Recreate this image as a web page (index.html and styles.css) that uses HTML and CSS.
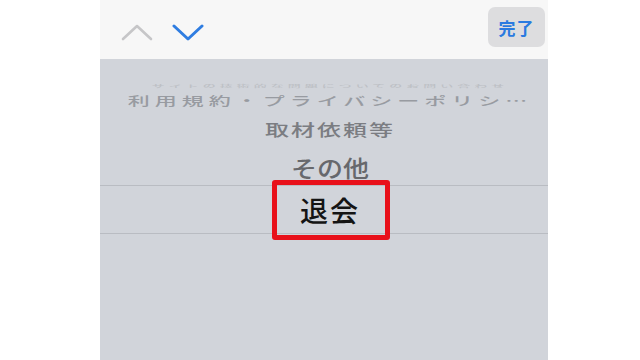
FILE: index.html
```html
<!DOCTYPE html>
<html lang="ja">
<head>
<meta charset="utf-8">
<link rel="stylesheet" href="styles.css">
</head>
<body>
<div class="page">
  <div class="panel">
    <div class="toolbar">
      <div class="arrows">
        <svg class="chev" width="32" height="20" viewBox="0 0 32 20"><path d="M2 16 L16 3 L30 16" fill="none" stroke="#c6c6c8" stroke-width="2.6" stroke-linecap="round" stroke-linejoin="round"/></svg>
        <svg class="chev" width="32" height="20" viewBox="0 0 32 20"><path d="M2 3 L16 16 L30 3" fill="none" stroke="#2f7de1" stroke-width="3" stroke-linecap="round" stroke-linejoin="round"/></svg>
      </div>
      <div class="done">完了</div>
    </div>
    <div class="picker">
      <div class="row r0"><span>サイトの技術的な問題についてのお問い合わせ</span></div>
      <div class="row r1"><span>利用規約・プライバシーポリシ…</span></div>
      <div class="row r2"><span>取材依頼等</span></div>
      <div class="row r3"><span>その他</span></div>
      <div class="row sel"><span>退会</span></div>
      <div class="mark"></div>
    </div>
  </div>
</div>
</body>
</html>
```
FILE: styles.css
```css
html, body {
  margin: 0;
  padding: 0;
  background: #ffffff;
  width: 640px;
  height: 360px;
  overflow: hidden;
  font-family: "Noto Sans CJK JP", "Noto Sans", sans-serif;
}
.page {
  display: flex;
  padding-left: 100px;
  height: 360px;
}
.panel {
  width: 448px;
  height: 360px;
  display: flex;
  flex-direction: column;
}
.toolbar {
  height: 59px;
  background: #f7f7f7;
  display: flex;
  align-items: flex-start;
  justify-content: space-between;
  box-sizing: border-box;
  padding: 7px 3px 0 21px;
}
.arrows {
  display: flex;
  gap: 19px;
  padding-top: 16px;
}
.chev { display: block; }
.done {
  width: 57px;
  height: 40px;
  border-radius: 7px;
  background: #dddddf;
  color: #2a7ae0;
  font-size: 17px;
  font-weight: 700;
  display: flex;
  align-items: center;
  justify-content: center;
  letter-spacing: 1px;
}
.picker {
  flex: 1;
  background: #d1d4da;
  position: relative;
  display: flex;
  flex-direction: column;
  padding-top: 20px;
  padding-left: 12px;
}
.row {
  display: flex;
  align-items: center;
  justify-content: center;
  white-space: nowrap;
  font-weight: 500;
}
.row span { display: block; }
.r0 {
  height: 14px;
  font-size: 13px;
  color: #bdc0c5;
}
.r0 span { transform: scaleY(0.32); letter-spacing: 4px; }
.r1 {
  height: 16px;
  font-size: 22px;
  color: #989ba1;
}
.r1 span { transform: scaleY(0.55); letter-spacing: 5px; }
.r2 {
  height: 38px;
  font-size: 24px;
  color: #7b7d82;
}
.r2 span { transform: scaleY(0.68); letter-spacing: 2px; }
.r3 {
  height: 38px;
  font-size: 26px;
  color: #67686c;
}
.r3 span { transform: scaleY(0.88); }
.sel {
  height: 47px;
  border-top: 1px solid #b9bcc2;
  border-bottom: 1px solid #b9bcc2;
  margin-left: -12px;
  padding-left: 12px;
  font-size: 28px;
  color: #141414;
  letter-spacing: 2px;
}
.mark {
  position: absolute;
  left: 172px;
  top: 121px;
  width: 118px;
  height: 60px;
  box-sizing: border-box;
  border: 5px solid #e8101a;
  border-radius: 3px;
}
```
